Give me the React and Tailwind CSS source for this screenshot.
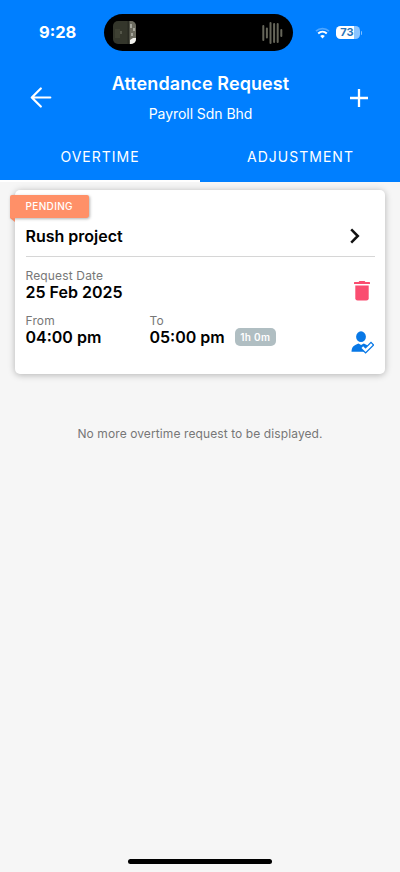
import React from 'react';

const WAVE = [
  { x: 0, h: 16 },
  { x: 3.6, h: 11 },
  { x: 7.2, h: 22 },
  { x: 10.8, h: 20 },
  { x: 14.4, h: 20 },
  { x: 18, h: 8 },
];

const StatusBar = () => (
  <div className="flex h-[65px] items-start pt-[14px]">
    <div className="flex h-[37px] w-[104px] items-center pl-[39px] text-[16.5px] font-bold text-white">9:28</div>
    <div className="flex h-[37px] w-[188.5px] items-center justify-between rounded-full bg-black pr-[10px] pl-[9px]">
      <svg width="23" height="23" viewBox="0 0 23 23">
        <defs>
          <clipPath id="thumb">
            <rect width="23" height="23" rx="5" />
          </clipPath>
        </defs>
        <g clipPath="url(#thumb)">
          <rect width="23" height="23" fill="#34362b" />
          <rect x="2" y="8" width="5" height="9" fill="#3e4033" />
          <rect x="7.5" y="10" width="1" height="3" fill="#77796a" />
          <rect x="14.5" width="2" height="23" fill="#292a22" />
          <rect x="16.5" width="6.5" height="23" fill="#6d6c60" />
          <path d="M17 3h2v4h-2zM20 7h2v3h-2zM18 12h2v3h-2z" fill="#a5a59b" />
          <path d="M17 19l3-2h3v6h-6z" fill="#f1f1ed" />
        </g>
      </svg>
      <svg width="21" height="24" viewBox="0 0 21 24">
        {WAVE.map((bar) => (
          <rect key={bar.x} x={bar.x + 0.3} y={12 - bar.h / 2} width="2" height={bar.h} rx="1" fill="#66665a" />
        ))}
      </svg>
    </div>
    <div className="flex h-[37px] items-center pl-[22px]">
      <svg width="15" height="12" viewBox="0 0 15 12" fill="none">
        <path d="M1 4.1C4.7.7 10.3.7 14 4.1" stroke="#4fa6ff" strokeWidth="1.8" />
        <path d="M3.2 6.5c2.5-2.3 6.1-2.3 8.6 0" stroke="white" strokeWidth="2" />
        <path d="M5.2 9c1.3-1.3 3.3-1.3 4.6 0l-2.3 2.4z" fill="white" />
      </svg>
      <div className="ml-[6px] flex h-[13px] w-[24px] items-center justify-center rounded-[4.5px] bg-[linear-gradient(90deg,#fff_73%,#8ac4ff_73%)] pr-px text-[11px] font-bold text-[#2874b8]">
        73
      </div>
      <div className="ml-px h-1 w-[1.5px] rounded-r-full bg-[#7fbfff]" />
    </div>
  </div>
);

const Header = () => (
  <header className="h-[182px] bg-[#007fff] text-white">
    <StatusBar />
    <div className="flex h-[65px] items-center justify-between pr-[32px] pl-[30px]">
      <svg width="22" height="22" viewBox="0 0 22 22" fill="none" stroke="white" strokeWidth="2.2" strokeLinecap="round" strokeLinejoin="round">
        <path d="M20.3 10.5H2M10.8 1.5L1.8 10.5l9 9" />
      </svg>
      <div className="flex flex-col items-center pt-[3px] pr-px">
        <h1 className="text-[18px] leading-[30px] font-semibold tracking-[0.1px]">Attendance Request</h1>
        <p className="text-[14px] leading-[30px] tracking-[-0.05px]">Payroll Sdn Bhd</p>
      </div>
      <svg width="18" height="18" viewBox="0 0 18 18" stroke="white" strokeWidth="2.3">
        <path d="M9 0v18M0 9h18" />
      </svg>
    </div>
    <nav className="grid h-[52px] grid-cols-2 text-[14px] tracking-[1px]">
      <button className="flex items-center justify-center border-b-2 border-white pt-[2px]">OVERTIME</button>
      <button className="flex items-center justify-center border-b-2 border-transparent pt-[2px] pl-px">ADJUSTMENT</button>
    </nav>
  </header>
);

const Field = ({ label, value }) => (
  <div>
    <div className="text-[12px] leading-[16px] tracking-[0.15px] text-[#777]">{label}</div>
    <div className="text-[16px] leading-[16px] font-semibold whitespace-nowrap">{value}</div>
  </div>
);

const RequestCard = () => (
  <div className="relative mx-[15px] mt-[8px] h-[184px] rounded-[5px] bg-white px-[10.5px] pt-[28px] text-black shadow-[0_1px_7px_rgba(0,0,0,0.28)]">
    <div className="absolute top-[5px] -left-[5px]">
      <div className="flex h-[23px] w-[78.5px] items-center rounded-t-[2px] rounded-br-[3px] bg-[#ff9068] pl-[15.5px] text-[10px] font-medium tracking-[0.35px] text-white shadow-[1px_1px_3px_rgba(0,0,0,0.3)]">
        PENDING
      </div>
      <svg className="absolute top-[23px] left-0" width="5" height="4" viewBox="0 0 5 4">
        <path d="M0 0h5v4z" fill="#f58a64" />
      </svg>
    </div>

    <div className="flex h-[39px] items-center justify-between border-b border-[#d6d6d6] pr-[15px] pb-[2px]">
      <h2 className="text-[16px] font-semibold">Rush project</h2>
      <svg width="10" height="16" viewBox="0 0 10 16" fill="none" stroke="#111" strokeWidth="2.5">
        <path d="M1.2 1.4L7.8 8l-6.6 6.6" />
      </svg>
    </div>

    <div className="flex justify-between">
      <div className="pt-[11px]">
        <Field label="Request Date" value="25 Feb 2025" />
        <div className="mt-[13px] flex">
          <div className="w-[124px]">
            <Field label="From" value="04:00 pm" />
          </div>
          <div className="flex items-end">
            <Field label="To" value="05:00 pm" />
            <span className="-mb-px ml-[10px] flex h-[18px] w-[41px] items-center justify-center rounded-[5px] bg-[#b0bec2] text-[10px] font-semibold tracking-[0.3px] text-white">
              1h 0m
            </span>
          </div>
        </div>
      </div>
      <div className="flex flex-col items-center gap-[29px] pt-[24px] pr-px">
        <svg width="16" height="20" viewBox="0 0 16 20" fill="#fa4d70">
          <path d="M0 1.6Q0 1 .6 1H4.6L5.4 0h5.2l.8 1h4q.6 0 .6.6V3H0z" />
          <path d="M1.3 4.5h13.4v12.7a2.3 2.3 0 0 1-2.3 2.3H3.6a2.3 2.3 0 0 1-2.3-2.3z" />
        </svg>
        <svg width="24" height="24" viewBox="0 0 24 24" fill="#0878e6">
          <ellipse cx="11" cy="6.7" rx="4.9" ry="5.4" />
          <path d="M1.5 21.7c.2-4.8 2-6.3 7-8.3l2.600 1.700 2.700-1.700 4 2-3 6.300z" />
          <path d="M13.200 18l2.400 2.400 5.400-5.400" fill="none" stroke="#0878e6" strokeWidth="4.800" strokeLinecap="square" />
          <path d="M13.200 18l2.400 2.400 5.400-5.400" fill="none" stroke="white" strokeWidth="2.400" strokeLinecap="square" />
        </svg>
      </div>
    </div>
  </div>
);

const App = () => (
  <div className="flex h-[872px] w-[400px] flex-col overflow-hidden bg-[#f6f6f6] font-[Inter,sans-serif]">
    <Header />
    <main className="flex-1">
      <RequestCard />
      <p className="mt-[50px] text-center text-[12px] leading-[20px] tracking-[0.1px] text-[#777]">
        No more overtime request to be displayed.
      </p>
    </main>
    <div className="mx-auto mb-[8px] h-[5px] w-[144px] rounded-full bg-black" />
  </div>
);

export default App;
